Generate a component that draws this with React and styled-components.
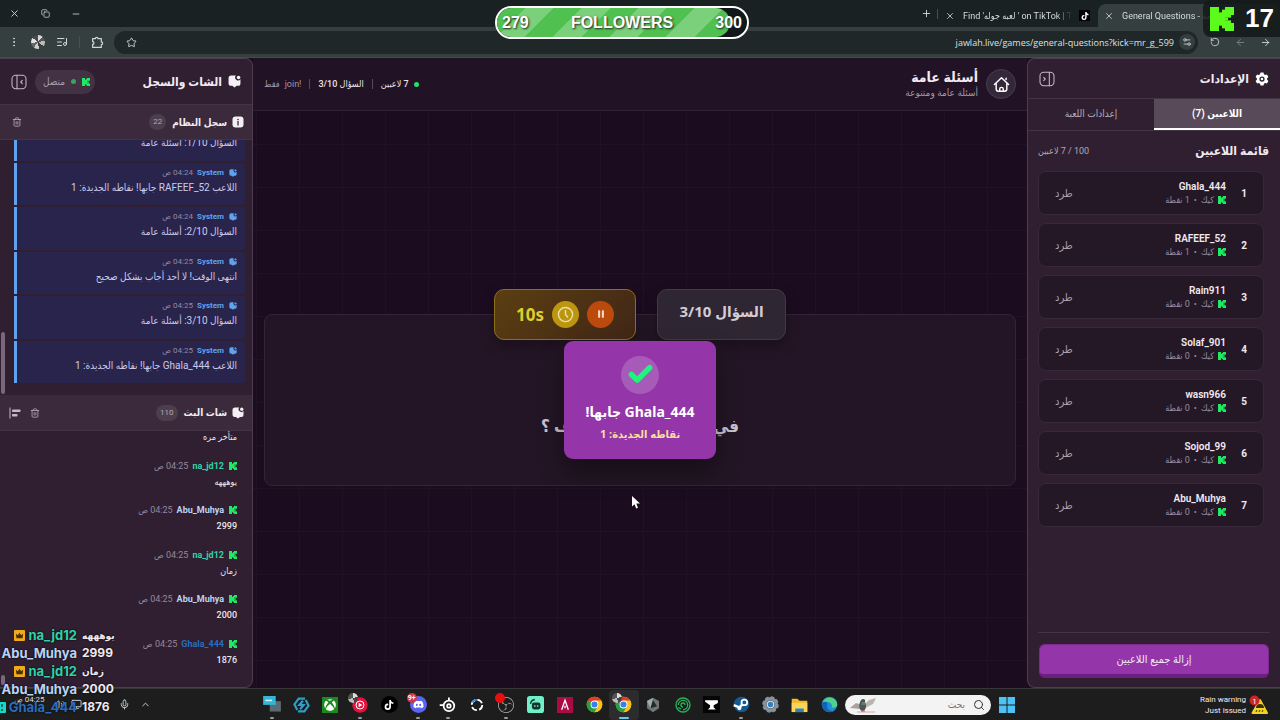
import styled, { createGlobalStyle, css } from 'styled-components';
import {
  X, Copy, Minus, Plus, Star, ListMusic, EllipsisVertical, RotateCw, ArrowLeft, ArrowRight,
  Trash2, Pause, Check, Search, Mic, ChevronUp, Volume2, Monitor, Settings2,
} from 'lucide-react';
import { FaTiktok, FaDiscord, FaXbox } from 'react-icons/fa';
import { SiObsstudio } from 'react-icons/si';


const GlobalStyle = createGlobalStyle`
  * { box-sizing: border-box; }
  body {
    margin: 0;
    background: #1b0c1f;
    font-family: Roboto, "Noto Sans", "DejaVu Sans Condensed", "DejaVu Sans", sans-serif;
    color: #f1eaf2;
    overflow: hidden;
  }
  button, input { font: inherit; color: inherit; border: 0; background: none; padding: 0; margin: 0; }
  h1, h2, h3, p, ul, ol { margin: 0; padding: 0; list-style: none; }
  svg { display: block; flex: none; }
`;

const Page = styled.div`
  position: relative;
  display: flex;
  flex-direction: column;
  height: 100vh;
  direction: rtl;
  overflow: hidden;
`;

/* ---------- browser ---------- */

const TabStrip = styled.div`
  display: flex;
  align-items: center;
  height: 27px;
  background: #1a2122;
  font-size: 9px;
  color: #d6dcdc;
`;

const BrowserTab = styled.div`
  display: flex;
  align-items: center;
  gap: 7px;
  height: 23px;
  margin-top: 4px;
  border-radius: 8px 8px 0 0;
  background: ${(props) => (props.$active ? '#353f3f' : 'transparent')};
  width: ${(props) => (props.$active ? '182px' : '160px')};
  padding: ${(props) => (props.$active ? '0 52px 0 5px' : '0 8px 0 6px')};
`;

const TabTitle = styled.span`
  flex: 1;
  min-width: 0;
  overflow: hidden;
  white-space: nowrap;
  direction: ltr;
  mask-image: linear-gradient(to left, transparent, #000 16px);
`;

const IconButton = styled.button`
  display: flex;
  align-items: center;
  justify-content: center;
  width: ${(props) => props.$size || 16}px;
  height: ${(props) => props.$size || 16}px;
  flex: none;
  color: ${(props) => props.$color || '#cfd6d6'};
`;

const TikTokFavicon = styled.span`
  display: flex;
  align-items: center;
  justify-content: center;
  width: 11px;
  height: 11px;
  background: #000;
  color: #fff;
`;

const Divider = styled.span`
  width: 1px;
  height: ${(props) => props.$height || 10}px;
  background: ${(props) => props.$color || '#465051'};
`;

const WindowControls = styled.div`
  display: flex;
  gap: 15px;
  margin-right: auto;
  padding-left: 6px;
`;

const Toolbar = styled.div`
  display: flex;
  align-items: center;
  gap: 9px;
  height: 31px;
  padding: 0 7px 0 6px;
  background: #353f3f;
  border-bottom: 1px solid #484b4e;
`;

const AddressBar = styled.div`
  display: flex;
  align-items: center;
  flex: 1;
  height: 23px;
  padding: 0 3px 0 9px;
  gap: 5px;
  border-radius: 12px;
  background: #1f2728;
`;

const AddressInput = styled.input`
  flex: 1;
  min-width: 0;
  direction: ltr;
  text-align: right;
  font-family: "Open Sans", sans-serif;
  font-size: 9px;
  color: #dde2e2;
`;

const TuneBadge = styled.span`
  display: flex;
  align-items: center;
  justify-content: center;
  width: 16px;
  height: 16px;
  border-radius: 50%;
  background: #353f3f;
`;

const Avatar = styled.span`
  width: 14px;
  height: 14px;
  border-radius: 50%;
  background: conic-gradient(#d8d8d8 0 12%, #555 0 22%, #bbb 0 35%, #3c3c3c 0 48%, #cfcfcf 0 60%, #666 0 72%, #e2e2e2 0 85%, #4a4a4a 0);
`;

/* ---------- shared panel parts ---------- */

const Main = styled.main`
  flex: 1;
  min-height: 0;
  display: grid;
  grid-template-columns: 253px 1fr 253px;
`;

const Panel = styled.aside`
  display: flex;
  flex-direction: column;
  min-height: 0;
  min-width: 0;
  background: #2f1f30;
  border: 1px solid #4d3d4e;
  ${(props) =>
    props.$side === 'right'
      ? css`border-radius: 8px 0 0 8px; border-right: 0;`
      : css`border-radius: 0 8px 8px 0; border-left: 0;`}
  overflow: hidden;
`;

const PanelHeader = styled.header`
  display: flex;
  align-items: center;
  gap: 8px;
  flex: none;
  height: ${(props) => props.$height}px;
  padding: 0 11px;
  border-bottom: 1px solid #443345;
`;

const PanelTitle = styled.h2`
  display: flex;
  align-items: center;
  gap: 6px;
  font-size: 12px;
  line-height: 16px;
  margin-left: auto;
  white-space: nowrap;
`;

const SubHeader = styled(PanelHeader)`
  background: #3a2a3b;
  gap: 6px;
  padding: 0 8px 0 9px;
`;

const SubTitle = styled.h3`
  display: flex;
  align-items: center;
  gap: 5px;
  font-size: 10px;
  white-space: nowrap;
`;

const CountBadge = styled.span`
  padding: 0 4px;
  border-radius: 8px;
  background: #4d3e4e;
  color: #b3a8b4;
  font-size: 8px;
  line-height: 16px;
  margin-left: auto;
`;

/* ---------- settings panel ---------- */

const Tabs = styled.div`
  display: grid;
  grid-template-columns: 1fr 1fr;
  flex: none;
  height: 32px;
  border-bottom: 1px solid #443345;
`;

const TabButton = styled.button`
  font-size: 10px;
  font-weight: ${(props) => (props.$active ? 600 : 500)};
  color: ${(props) => (props.$active ? '#fff' : '#b9adba')};
  background: ${(props) => (props.$active ? '#594a5a' : 'transparent')};
  border-bottom: 2px solid ${(props) => (props.$active ? '#fff' : 'transparent')};
`;

const ListHeading = styled.div`
  display: flex;
  align-items: center;
  justify-content: space-between;
  height: 40px;
  padding: 0 11px 0 10px;
  flex: none;
`;

const ListCount = styled.span`
  font-size: 9px;
  color: #b3a8b4;
`;

const PlayerList = styled.ol`
  display: flex;
  flex-direction: column;
  gap: 8px;
  flex: 1;
  margin: 0 10px;
  padding: 0 6px 0 0;
  border-bottom: 1px solid #443345;
`;

const PlayerCard = styled.li`
  display: flex;
  align-items: center;
  height: 44px;
  padding: 0 16px;
  border: 1px solid #37293a;
  border-radius: 8px;
  background: #251826;
`;

const Rank = styled.span`
  width: 21px;
  font-size: 10px;
  font-weight: 700;
`;

const PlayerInfo = styled.div`
  flex: 1;
`;

const PlayerName = styled.p`
  font-size: 10px;
  line-height: 14px;
  font-weight: 600;
`;

const PlayerMeta = styled.p`
  display: flex;
  align-items: center;
  gap: 4px;
  font-size: 9px;
  line-height: 12px;
  font-weight: 400;
  color: #988a9a;
`;

const KickButton = styled.button`
  font-size: 11px;
  color: #a99dab;
`;

const PanelFooter = styled.footer`
  padding: 11px 11px 9px;
`;

const RemoveAll = styled.button`
  display: block;
  width: 100%;
  height: 34px;
  border-radius: 6px;
  border: 1px solid #7b2890;
  border-bottom: 4px solid #6d1f82;
  background: #9535aa;
  font-size: 11px;
`;

/* ---------- game area ---------- */

const Game = styled.section`
  display: flex;
  flex-direction: column;
  min-width: 0;
  background: #1b0c1f;
`;

const GameHeader = styled.header`
  display: flex;
  align-items: center;
  gap: 8px;
  height: 53px;
  padding: 0 11px;
  background: #211225;
  border-bottom: 1px solid #302133;
`;

const HomeButton = styled.button`
  display: flex;
  align-items: center;
  justify-content: center;
  width: 30px;
  height: 30px;
  border-radius: 50%;
  border: 1px solid #4a3d4d;
  background: #35273a;
`;

const GameTitle = styled.h1`
  font-size: 14px;
  line-height: 17px;
`;

const GameSubtitle = styled.p`
  font-size: 10px;
  line-height: 14px;
  font-weight: 400;
  color: #a396a6;
`;

const Status = styled.div`
  display: flex;
  align-items: center;
  gap: 8px;
  margin-right: auto;
  font-size: 9px;
`;

const StatusItem = styled.span`
  display: flex;
  align-items: center;
  gap: 5px;
  font-weight: ${(props) => (props.$muted ? 400 : 500)};
  color: ${(props) => (props.$muted ? '#a396a6' : '#e9e2ea')};
`;

const Dot = styled.span`
  width: 5px;
  height: 5px;
  border-radius: 50%;
  background: ${(props) => props.$color};
`;

const Board = styled.div`
  flex: 1;
  display: flex;
  align-items: center;
  padding: 0 11px;
  background-image: linear-gradient(#1f1223 1px, transparent 1px), linear-gradient(90deg, #1f1223 1px, transparent 1px);
  background-size: 43px 43px;
  background-position: 3px 33px;
`;

const QuestionCard = styled.div`
  position: relative;
  display: flex;
  justify-content: center;
  align-items: center;
  flex: 1;
  height: 172px;
  padding-top: 53px;
  border: 1px solid #322436;
  border-radius: 8px;
  background: #231525;
`;

const Question = styled.p`
  display: flex;
  justify-content: space-between;
  width: 198px;
  font-size: 17px;
  font-weight: 700;
  color: #cbc3cd;
`;

const BadgeRow = styled.div`
  position: absolute;
  top: -26px;
  left: 0;
  right: 0;
  display: flex;
  justify-content: center;
  gap: 21px;
`;

const Badge = styled.div`
  display: flex;
  align-items: center;
  justify-content: center;
  gap: 8px;
  height: 51px;
  width: ${(props) => (props.$timer ? '142px' : '129px')};
  border: 1px solid ${(props) => (props.$timer ? '#8c7019' : '#443947')};
  border-radius: 10px;
  background: ${(props) => (props.$timer ? 'linear-gradient(135deg, #5b3f11, #412617)' : '#2f2634')};
  color: ${(props) => (props.$timer ? '#dfce2f' : '#d3ccd5')};
  font-family: "Noto Sans", "DejaVu Sans Condensed", sans-serif;
  font-size: ${(props) => (props.$timer ? '17px' : '15px')};
  font-weight: 700;
  padding-bottom: ${(props) => (props.$timer ? '0' : '6px')};
  box-shadow: 0 6px 14px rgba(0, 0, 0, 0.25);
`;

const Round = styled.span`
  display: flex;
  align-items: center;
  justify-content: center;
  width: ${(props) => props.$size || 27}px;
  height: ${(props) => props.$size || 27}px;
  border-radius: 50%;
  background: ${(props) => props.$color};
`;

const PauseButton = styled.button`
  display: flex;
  align-items: center;
  justify-content: center;
  width: 27px;
  height: 27px;
  border-radius: 50%;
  background: #bb4a0c;
  color: #f4d9c8;
`;

const WinnerModal = styled.div`
  position: absolute;
  top: 26px;
  left: 50%;
  transform: translateX(-50%);
  display: flex;
  flex-direction: column;
  align-items: center;
  width: 152px;
  height: 118px;
  padding-top: 15px;
  border-radius: 9px;
  background: #9435a9;
  box-shadow: 0 14px 26px rgba(0, 0, 0, 0.35);
  font-family: "Noto Sans", "DejaVu Sans Condensed", sans-serif;
  font-weight: 700;
  white-space: nowrap;
`;

const CheckCircle = styled.span`
  display: flex;
  align-items: center;
  justify-content: center;
  width: 38px;
  height: 38px;
  border-radius: 50%;
  background: #a75bb8;
  color: #1ef57d;
  margin-bottom: 7px;
`;

const WinnerName = styled.p`
  font-size: 14px;
  line-height: 22px;
  color: #fff;
`;

const WinnerPoints = styled.p`
  font-size: 11px;
  line-height: 22px;
  color: #f8df9a;
`;

const Cursor = styled.svg`
  position: absolute;
  left: 50%;
  top: 181px;
  margin-left: -8px;
`;

/* ---------- chat panel ---------- */

const ConnectPill = styled.span`
  display: flex;
  align-items: center;
  gap: 6px;
  height: 24px;
  padding: 0 5px 0 8px;
  border-radius: 12px;
  background: #433244;
  color: #a99dab;
  font-size: 10px;
`;

const Feed = styled.div`
  position: relative;
  display: flex;
  flex-direction: column;
  justify-content: flex-end;
  flex: ${(props) => (props.$height ? `none` : 1)};
  height: ${(props) => (props.$height ? `${props.$height}px` : 'auto')};
  min-height: 0;
  padding: 0 7px 12px 14px;
  overflow: hidden;
`;

const FeedList = styled.ul`
  display: flex;
  flex-direction: column;
  flex: none;
  gap: 2px;
  height: 265px;
`;

const FeedRow = styled.li`
  flex: 1;
  min-height: 0;
  padding: 4px 8px;
  ${(props) =>
    props.$system &&
    css`
      padding: 3px 8px;
      background: #29244c;
      border-left: 3px solid #5fa3ee;
      border-radius: 0 3px 3px 0;
    `}
`;

const RowMeta = styled.div`
  display: flex;
  align-items: center;
  gap: 4px;
  font-size: ${(props) => (props.$system ? '8px' : '9px')};
  line-height: 14px;
  color: #9488a0;
`;

const Author = styled.span`
  font-weight: 700;
  margin-right: 1px;
  color: ${(props) => props.$color};
`;

const RowText = styled.p`
  font-size: ${(props) => (props.$system ? '10px' : '9px')};
  line-height: ${(props) => (props.$system ? '16px' : '19px')};
  font-weight: ${(props) => (props.$system ? 400 : 500)};
  color: ${(props) => (props.$system ? '#c9cbec' : '#ece6ed')};
  white-space: nowrap;
`;

const ScrollThumb = styled.span`
  position: absolute;
  left: 1px;
  bottom: ${(props) => props.$bottom}px;
  width: 4px;
  height: ${(props) => props.$height}px;
  border-radius: 2px;
  background: #79687b;
`;

/* ---------- taskbar ---------- */

const Taskbar = styled.footer`
  display: grid;
  grid-template-columns: 1fr auto 1fr;
  align-items: center;
  height: 32px;
  padding-right: 8px;
  background: #1d1d1e;
  border-top: 1px solid #39363a;
`;

const Weather = styled.div`
  display: flex;
  align-items: center;
  gap: 3px;
  padding-right: 3px;
  font-size: 8px;
  line-height: 11px;
  white-space: nowrap;
`;

const Dock = styled.div`
  display: flex;
  align-items: center;
  gap: 8px;
`;

const SearchBox = styled.label`
  display: flex;
  align-items: center;
  gap: 8px;
  width: 146px;
  height: 20px;
  padding: 0 6px 0 4px;
  border-radius: 10px;
  background: #f3f3f3;
  color: #333;
`;

const SearchInput = styled.input`
  flex: 1;
  min-width: 0;
  font-size: 10px;
  &::placeholder { color: #777; opacity: 1; }
`;

const Apps = styled.div`
  display: grid;
  grid-template-columns: repeat(20, 1fr);
  width: 587px;
  margin-right: -7px;
`;

const AppButton = styled.button`
  position: relative;
  display: flex;
  align-items: center;
  justify-content: center;
  height: 30px;
  border-radius: 4px;
  background: ${(props) => (props.$current ? '#2c2c2e' : 'transparent')};
  &::after {
    content: '';
    position: absolute;
    bottom: 1px;
    width: ${(props) => (props.$current ? '10px' : '4px')};
    height: 2px;
    border-radius: 1px;
    background: ${(props) => (props.$current ? '#6cc9e8' : '#9a9a9a')};
    display: ${(props) => (props.$current || props.$running ? 'block' : 'none')};
  }
`;

const AppBadge = styled.span`
  position: absolute;
  top: 3px;
  left: 3px;
  min-width: 10px;
  height: 10px;
  border-radius: 5px;
  direction: ltr;
  font-size: 7px;
  line-height: 10px;
  font-weight: 700;
  color: #fff;
  background: ${(props) => props.$color};
`;

const Tray = styled.div`
  display: flex;
  align-items: center;
  justify-content: flex-end;
  gap: 9px;
  padding-left: 14px;
  color: #dcdcdc;
`;

const TrayGroup = styled.div`
  display: flex;
  gap: 6px;
  margin-right: 28px;
`;

const Clock = styled.time`
  font-size: 8px;
  line-height: 10px;
  height: 20px;
  white-space: nowrap;
`;

/* ---------- stream overlays ---------- */

const FollowerGoal = styled.div`
  position: absolute;
  top: 6px;
  left: 495px;
  display: grid;
  grid-template-columns: 1fr auto 1fr;
  align-items: center;
  width: 254px;
  height: 33px;
  padding: 0 5px;
  border: 2px solid #fff;
  border-radius: 17px;
  direction: ltr;
  font: 700 16px "Liberation Sans", sans-serif;
  color: #fff;
  text-shadow: 1px 1px 2px #222;
  background: #11181a;
  overflow: hidden;
`;

const GoalFill = styled.span`
  position: absolute;
  inset: 0 auto 0 0;
  border-radius: 0 15px 15px 0;
  background: repeating-linear-gradient(135deg, #50c150 0 20px, #7bd07b 20px 40px);
`;

const GoalText = styled.span`
  position: relative;
  text-align: ${(props) => props.$align || 'left'};
`;

const KickCounter = styled.div`
  position: absolute;
  top: 0;
  right: 0;
  display: flex;
  align-items: center;
  gap: 11px;
  height: 37px;
  padding: 0 6px 0 7px;
  border-radius: 8px 0 0 8px;
  direction: ltr;
  background: rgba(20, 26, 26, 0.88);
  font: 700 26px "Liberation Sans", sans-serif;
  color: #fff;
`;

const StreamChat = styled.ul`
  position: absolute;
  left: 0;
  bottom: 4px;
  direction: ltr;
  font: 700 13px/18px Inter, "DejaVu Sans Condensed", sans-serif;
  text-shadow: 0 0 2px #000;
`;

const StreamLine = styled.li`
  display: grid;
  grid-template-columns: 77px auto;
  gap: 5px;
  height: 18px;
  white-space: nowrap;
`;

const StreamAuthor = styled.span`
  display: flex;
  align-items: center;
  justify-content: flex-end;
  gap: 3px;
  color: ${(props) => props.$color};
`;

const StreamText = styled.span`
  font-size: ${(props) => (props.$arabic ? '10px' : '12px')};
`;

/* ---------- icons ---------- */

const KickLogo = ({ size = 9, color = '#1dea62' }) => (
  <svg width={size} height={size} viewBox="0 0 8 9" preserveAspectRatio="none" fill={color}>
    <rect width="3" height="9" />
    <rect x="3" y="2" width="1" height="5" />
    <rect x="4" y="1" width="1" height="7" />
    <rect x="5" width="3" height="3" />
    <rect x="5" y="3" width="2" height="1" />
    <rect x="5" y="4" width="1" height="1" />
    <rect x="5" y="5" width="2" height="1" />
    <rect x="5" y="6" width="3" height="3" />
  </svg>
);

const ChatIcon = ({ size = 12, color = '#f4eff5' }) => (
  <svg width={size} height={size} viewBox="0 0 24 24" fill={color}>
    <path d="M6 1h8.500a5 5 0 0 0 8.500 7v8a4 4 0 0 1-4 4h-3l-4 3-4-3H6a5 5 0 0 1-5-5V6a5 5 0 0 1 5-5z" />
    <circle cx="19.5" cy="4.5" r="3.3" />
  </svg>
);

const InfoIcon = () => (
  <svg width="12" height="12" viewBox="0 0 24 24">
    <rect x="1" y="1" width="22" height="22" rx="6" fill="#f4eff5" />
    <path d="M12 11v7" stroke="#3a2a3b" strokeWidth="2.6" strokeLinecap="round" />
    <circle cx="12" cy="7" r="1.6" fill="#3a2a3b" />
  </svg>
);

const GearIcon = () => (
  <svg width="14" height="14" viewBox="0 0 24 24" fill="none">
    <path
      fill="#fff"
      fillRule="evenodd"
      d="M9.5 1h5l.9 3 2 1.2 3.1-.8 2.5 4.3-2.2 2.200v2.200l2.200 2.200-2.500 4.300-3.100-.8-2 1.200-.9 3h-5l-.9-3-2-1.200-3.100.8L1 15.300l2.200-2.200v-2.200L1 8.700l2.500-4.300 3.100.8 2-1.200zM12 7.500a4.500 4.500 0 1 0 0 9 4.500 4.500 0 0 0 0-9z"
    />
    <circle cx="12" cy="12" r="2.2" fill="#fff" />
  </svg>
);

const SidebarIcon = ({ flip }) => (
  <svg width="16" height="16" viewBox="0 0 24 24" fill="none" stroke="#c3b8c5" strokeWidth="1.6" strokeLinecap="round">
    <rect x="1.5" y="2" width="21" height="20" rx="5.5" />
    {flip ? <path d="M15.5 2v20M7 9.5l2.500 2.500L7 14.500" /> : <path d="M9 2v20M17 9.500L14.500 12l2.500 2.500" />}
  </svg>
);

const HomeIcon = () => (
  <svg width="17" height="17" viewBox="0 0 24 24" fill="none" stroke="#fff" strokeWidth="2" strokeLinecap="round" strokeLinejoin="round">
    <path d="M2 12l10-9.500L22 12M18.500 5V3M4.500 10v8.500a3 3 0 0 0 3 3h9a3 3 0 0 0 3-3V10" />
    <path d="M9.500 21v-2.500a2.500 2.500 0 0 1 5 0V21" />
  </svg>
);

const PuzzleIcon = () => (
  <svg width="13" height="13" viewBox="0 0 24 24" fill="none" stroke="currentColor" strokeWidth="2.2" strokeLinejoin="round">
    <path d="M3 5h5a2.500 2.500 0 0 1 5 0h6v6a2.500 2.500 0 0 1 0 5v5H3v-5.500a2.500 2.500 0 0 0 0-5z" />
  </svg>
);

const AlignIcon = () => (
  <svg width="12" height="12" viewBox="0 0 24 24" fill="#c3b8c5">
    <rect x="1" y="1" width="2" height="22" />
    <rect x="6" y="5" width="17" height="5" rx="1.5" />
    <rect x="6" y="14" width="11" height="5" rx="1.5" />
  </svg>
);

const ClockIcon = () => (
  <svg width="17" height="17" viewBox="0 0 24 24" fill="none" stroke="#eadfa8" strokeWidth="2" strokeLinecap="round">
    <circle cx="12" cy="12" r="10" />
    <path d="M12 6.500V12l3 3.500" />
  </svg>
);

const CrownBadge = () => (
  <svg width="11" height="11" viewBox="0 0 12 12">
    <rect width="12" height="12" rx="1" fill="#efab1b" />
    <path d="M2 4l2.200 1.800L6 3l1.800 2.800L10 4l-.7 5H2.700z" fill="#4a2f00" />
  </svg>
);

const BotBadge = () => (
  <svg width="10" height="11" viewBox="0 0 10 11">
    <rect width="10" height="11" rx="1" fill="#17d9c5" />
    <path d="M3 2v7M6 2v3M6 7v2" stroke="#0b4b52" strokeWidth="1.5" />
  </svg>
);

const WarningIcon = () => (
  <svg width="20" height="20" viewBox="0 0 20 20">
    <path d="M11 5l7 13H3.500z" fill="#f4d321" stroke="#f4d321" strokeWidth="2" strokeLinejoin="round" />
    <path d="M7 13a4 4 0 0 1 8 0z" fill="#3a3206" />
    <path d="M8 15l-1 2M11 15l-1 2M14 15l-1 2" stroke="#3a3206" />
    <circle cx="5.5" cy="5.5" r="5" fill="#c62828" />
    <text x="5.5" y="8.5" fontSize="8" textAnchor="middle" fill="#fff">1</text>
  </svg>
);

const StartIcon = () => (
  <svg width="16" height="16" viewBox="0 0 16 16" fill="#4cc2f5">
    <rect width="7.5" height="7.5" />
    <rect x="8.5" width="7.5" height="7.5" />
    <rect y="8.5" width="7.5" height="7.5" />
    <rect x="8.5" y="8.5" width="7.5" height="7.5" />
  </svg>
);

const Pigeon = () => (
  <svg width="28" height="16" viewBox="0 0 28 16">
    <path d="M15 8l5-5 7-2-3 6-8 4z" fill="#b9b5ac" />
    <path d="M1 11l6-5 6 2-2 4z" fill="#a7a49d" />
    <path d="M12 3c2-2 5-1 4 2 2 4 1 8-2 9-4 0-5-6-2-11z" fill="#4d555c" />
    <path d="M13 5h3v3h-4z" fill="#5d7f6c" />
    <path d="M8 15h18" stroke="#d1aaa6" />
    <path d="M13 13v2M15 13v2" stroke="#c7504a" />
  </svg>
);

const ChromeIcon = () => (
  <svg width="17" height="17" viewBox="0 0 24 24">
    <circle cx="12" cy="12" r="11" fill="#fbc116" />
    <path d="M12 12L2.500 6.500A11 11 0 0 1 21.500 6.500z" fill="#e33b2e" />
    <path d="M12 12L2.500 6.500A11 11 0 0 0 12 23l5-8z" fill="#269f42" />
    <path d="M12 6.500h9.500A11 11 0 0 1 12 23l5-8z" fill="#fbc116" />
    <circle cx="12" cy="12" r="5.5" fill="#fff" />
    <circle cx="12" cy="12" r="4.3" fill="#3b7ded" />
  </svg>
);

const EdgeIcon = () => (
  <svg width="17" height="17" viewBox="0 0 24 24">
    <circle cx="12" cy="12" r="11" fill="#1f8fd8" />
    <path d="M2 9a11 11 0 0 1 21 3c0 4-4 5-8 4 3-5-5-10-13-7z" fill="#4fd08b" />
    <path d="M9 12c-2 6 3 10 9 9A11 11 0 0 1 1.500 10c3-3 8-2 7.500 2z" fill="#1462b5" />
  </svg>
);

const FolderIcon = () => (
  <svg width="17" height="16" viewBox="0 0 24 22">
    <path d="M1 2h8l3 3h11v16H1z" fill="#f2b92e" />
    <path d="M1 8h22v13H1z" fill="#fbd45c" />
    <path d="M6 21v-5h12v5z" fill="#2d83bf" />
  </svg>
);

const SettingsApp = () => (
  <svg width="17" height="17" viewBox="0 0 24 24">
    <circle cx="12" cy="12" r="8" fill="none" stroke="#87929d" strokeWidth="5" />
    <circle cx="12" cy="12" r="10.2" fill="none" stroke="#87929d" strokeWidth="3" strokeDasharray="5 3" />
    <circle cx="12" cy="12" r="4.5" fill="#2f7fc4" stroke="#dce6ee" strokeWidth="1.5" />
  </svg>
);

const SteamIcon = () => (
  <svg width="17" height="17" viewBox="0 0 24 24">
    <circle cx="12" cy="12" r="11" fill="#145a91" />
    <path d="M1 13l8 3 5-5" stroke="#fff" strokeWidth="3.5" fill="none" />
    <circle cx="9" cy="17" r="3" fill="#fff" />
    <circle cx="16" cy="9" r="4" fill="#145a91" stroke="#fff" strokeWidth="2.5" />
  </svg>
);

const AnvilIcon = () => (
  <svg width="17" height="17" viewBox="0 0 24 24">
    <rect width="24" height="24" fill="#050505" />
    <path d="M3 6h18v4l-6 3v3l3 3H7l3-3v-3L3 8z" fill="#fff" />
  </svg>
);

const SpiralIcon = () => (
  <svg width="16" height="16" viewBox="0 0 24 24" fill="none" stroke="#27b35a" strokeWidth="2">
    <circle cx="12" cy="12" r="10.5" />
    <path d="M5 12a7 7 0 1 1 7 7M12 15a3 3 0 1 1 3-3M9 18l-4-2" />
  </svg>
);

const CubeIcon = () => (
  <svg width="16" height="16" viewBox="0 0 24 24">
    <path d="M12 1l9 5v11l-9 6-9-6V6z" fill="#6f7678" />
    <path d="M12 5l6 9-10 3z" fill="#23282a" />
    <path d="M3 6l9-5-4 16z" fill="#a4abad" />
  </svg>
);

const RedAIcon = () => (
  <svg width="16" height="16" viewBox="0 0 24 24">
    <rect width="24" height="24" fill="#a90b45" />
    <path d="M7 19l5-14 5 14M12 13v4" stroke="#fff" strokeWidth="2" fill="none" />
  </svg>
);

const MintIcon = () => (
  <svg width="17" height="17" viewBox="0 0 24 24">
    <rect width="24" height="24" rx="4" fill="#70f0c8" />
    <rect x="7" y="9" width="12" height="10" rx="3" fill="#16332c" />
    <path d="M5 11a7 7 0 0 1 6-6" stroke="#16332c" strokeWidth="2" fill="none" />
    <path d="M11 13v2M15 13v2" stroke="#70f0c8" strokeWidth="2" />
  </svg>
);

const RingIcon = () => (
  <svg width="14" height="14" viewBox="0 0 24 24" fill="none" strokeWidth="3">
    <circle cx="12" cy="12" r="9" stroke="#fff" strokeDasharray="10 4" />
    <path d="M12 3a9 9 0 0 0-8 5" stroke="#2f8fe0" />
  </svg>
);

const SteelIcon = () => (
  <svg width="17" height="17" viewBox="0 0 24 24" fill="none" stroke="#fff" strokeWidth="2.5">
    <circle cx="14" cy="14" r="7.5" />
    <circle cx="14" cy="14" r="2.5" />
    <path d="M1 13h6M14 2v4" />
  </svg>
);

const MusicIcon = () => (
  <svg width="16" height="16" viewBox="0 0 24 24">
    <circle cx="12" cy="12" r="11.5" fill="#e8113c" />
    <circle cx="12" cy="12" r="6" fill="none" stroke="#fff" strokeWidth="1.5" />
    <path d="M10 8.500l5.500 3.500-5.500 3.500z" fill="#fff" />
  </svg>
);

const XboxIcon = () => (
  <svg width="16" height="16" viewBox="0 0 24 24">
    <rect width="24" height="24" fill="#198a20" />
    <g transform="translate(3 3)"><FaXbox size={18} color="#fff" /></g>
  </svg>
);

const BoltIcon = () => (
  <svg width="17" height="16" viewBox="0 0 24 22" fill="none" stroke="#2f9fc8" strokeWidth="3">
    <path d="M17 2H8L2 10l4 8M7 20h9l6-8-4-8M14 5l-5 6h6l-5 6" />
  </svg>
);

const DesktopIcon = () => (
  <svg width="18" height="17" viewBox="0 0 24 23">
    <rect x="9" y="7" width="15" height="14" fill="#5b6b74" />
    <rect width="17" height="12" fill="#35b6d6" />
    <path d="M3 6h9" stroke="#d7f4fb" strokeWidth="2" />
  </svg>
);

/* ---------- data ---------- */

const players = [
  { name: 'Ghala_444', points: 1 },
  { name: 'RAFEEF_52', points: 1 },
  { name: 'Rain911', points: 0 },
  { name: 'Solaf_901', points: 0 },
  { name: 'wasn966', points: 0 },
  { name: 'Sojod_99', points: 0 },
  { name: 'Abu_Muhya', points: 0 },
];

const systemLog = [
  { time: '04:24', text: 'السؤال 1/10: أسئلة عامة' },
  { time: '04:24', text: 'اللاعب RAFEEF_52 جابها! نقاطه الجديدة: 1' },
  { time: '04:24', text: 'السؤال 2/10: أسئلة عامة' },
  { time: '04:25', text: 'انتهى الوقت! لا أحد أجاب بشكل صحيح' },
  { time: '04:25', text: 'السؤال 3/10: أسئلة عامة' },
  { time: '04:25', text: 'اللاعب Ghala_444 جابها! نقاطه الجديدة: 1' },
];

const TEAL = '#2fd3a8';
const PALE = '#bcd3f5';
const BLUE = '#2b6cbf';

const chat = [
  { name: 'na_jd12', color: TEAL, text: 'متأخر مره', arabic: true },
  { name: 'na_jd12', color: TEAL, text: 'يوهههه', arabic: true },
  { name: 'Abu_Muhya', color: PALE, text: '2999' },
  { name: 'na_jd12', color: TEAL, text: 'زمان', arabic: true },
  { name: 'Abu_Muhya', color: PALE, text: '2000' },
  { name: 'Ghala_444', color: BLUE, text: '1876' },
];

const apps = [
  { name: 'Edge', icon: <EdgeIcon /> },
  { name: 'Explorer', icon: <FolderIcon /> },
  { name: 'Settings', icon: <SettingsApp /> },
  { name: 'Steam', icon: <SteamIcon />, running: true },
  { name: 'Anvil', icon: <AnvilIcon /> },
  { name: 'Spiral', icon: <SpiralIcon /> },
  { name: 'Cube', icon: <CubeIcon /> },
  { name: 'Chrome', icon: <ChromeIcon />, current: true, avatar: true },
  { name: 'Chrome work', icon: <ChromeIcon /> },
  { name: 'Armoury', icon: <RedAIcon /> },
  { name: 'Streamlabs', icon: <MintIcon /> },
  { name: 'OBS', icon: <SiObsstudio size={16} color="#b5b5b5" />, running: true, badge: '\u00a0', badgeColor: '#e60e0e' },
  { name: 'Ring', icon: <RingIcon /> },
  { name: 'SteelSeries', icon: <SteelIcon />, running: true },
  { name: 'Discord', icon: <Round $size={17} $color="#5865f2"><FaDiscord size={11} color="#fff" /></Round>, running: true, badge: '9+', badgeColor: '#c8394b' },
  { name: 'TikTok', icon: <Round $size={17} $color="#000"><FaTiktok size={10} color="#fff" /></Round> },
  { name: 'Music', icon: <MusicIcon />, running: true, avatar: true },
  { name: 'Xbox', icon: <XboxIcon /> },
  { name: 'Bolt', icon: <BoltIcon /> },
  { name: 'Desktop', icon: <DesktopIcon />, running: true },
];

function Browser() {
  return (
    <>
      <TabStrip>
        <BrowserTab $active>
          <TabTitle>General Questions - أسئلة عامة</TabTitle>
          <IconButton $size={12} aria-label="Close tab"><X size={10} /></IconButton>
        </BrowserTab>
        <BrowserTab>
          <TikTokFavicon><FaTiktok size={8} /></TikTokFavicon>
          <TabTitle>Find 'لعبه جوله ' on TikTok | TikTok</TabTitle>
          <IconButton $size={12} aria-label="Close tab"><X size={10} /></IconButton>
        </BrowserTab>
        <Divider />
        <IconButton $size={22} aria-label="New tab"><Plus size={11} /></IconButton>
        <WindowControls>
          <IconButton aria-label="Minimize"><Minus size={10} /></IconButton>
          <IconButton aria-label="Restore"><Copy size={9} /></IconButton>
          <IconButton aria-label="Close"><X size={11} /></IconButton>
        </WindowControls>
      </TabStrip>
      <Toolbar>
        <IconButton aria-label="Back"><ArrowRight size={11} /></IconButton>
        <IconButton aria-label="Forward" $color="#788384"><ArrowLeft size={11} /></IconButton>
        <IconButton aria-label="Reload"><RotateCw size={10} transform="scale(-1 1)" /></IconButton>
        <AddressBar>
          <TuneBadge><Settings2 size={10} color="#cfd6d6" /></TuneBadge>
          <AddressInput aria-label="Address" readOnly value="jawlah.live/games/general-questions?kick=mr_g_599" />
          <IconButton aria-label="Bookmark"><Star size={11} /></IconButton>
        </AddressBar>
        <IconButton aria-label="Extensions"><PuzzleIcon /></IconButton>
        <Divider $height={12} />
        <IconButton aria-label="Media"><ListMusic size={12} /></IconButton>
        <Avatar />
        <IconButton aria-label="Menu"><EllipsisVertical size={12} /></IconButton>
      </Toolbar>
    </>
  );
}

function SettingsPanel() {
  return (
    <Panel $side="right">
      <PanelHeader $height={40}>
        <PanelTitle><GearIcon />الإعدادات</PanelTitle>
        <IconButton aria-label="إخفاء"><SidebarIcon flip /></IconButton>
      </PanelHeader>
      <Tabs>
        <TabButton $active>اللاعبين (7)</TabButton>
        <TabButton>إعدادات اللعبة</TabButton>
      </Tabs>
      <ListHeading>
        <PanelTitle>قائمة اللاعبين</PanelTitle>
        <ListCount>100 / 7 لاعبين</ListCount>
      </ListHeading>
      <PlayerList>
        {players.map((p, i) => (
          <PlayerCard key={p.name}>
            <Rank>{i + 1}</Rank>
            <PlayerInfo>
              <PlayerName>{p.name}</PlayerName>
              <PlayerMeta>
                <KickLogo size={8} />
                <span>كيك</span>
                <span>•</span>
                <span>{p.points} نقطة</span>
              </PlayerMeta>
            </PlayerInfo>
            <KickButton>طرد</KickButton>
          </PlayerCard>
        ))}
      </PlayerList>
      <PanelFooter>
        <RemoveAll>إزالة جميع اللاعبين</RemoveAll>
      </PanelFooter>
    </Panel>
  );
}

function GameArea() {
  return (
    <Game>
      <GameHeader>
        <HomeButton aria-label="الرئيسية"><HomeIcon /></HomeButton>
        <div>
          <GameTitle>أسئلة عامة</GameTitle>
          <GameSubtitle>أسئلة عامة ومتنوعة</GameSubtitle>
        </div>
        <Status>
          <StatusItem><Dot $color="#22e06a" />7 لاعبين</StatusItem>
          <Divider $color="#57485a" />
          <StatusItem>السؤال 3/10</StatusItem>
          <Divider $color="#57485a" />
          <StatusItem $muted><bdi>join!</bdi> فقط</StatusItem>
        </Status>
      </GameHeader>
      <Board>
        <QuestionCard>
          <Question><span>في</span><span>ـف ؟</span></Question>
          <BadgeRow>
            <Badge>السؤال 3/10</Badge>
            <Badge $timer>
              <PauseButton aria-label="إيقاف"><Pause size={10} fill="currentColor" strokeWidth={0} /></PauseButton>
              <Round $color="#bd960f"><ClockIcon /></Round>
              <span>10s</span>
            </Badge>
          </BadgeRow>
          <WinnerModal>
            <CheckCircle><Check size={27} strokeWidth={5} /></CheckCircle>
            <WinnerName><bdi>Ghala_444</bdi> جابها!</WinnerName>
            <WinnerPoints>نقاطه الجديدة: 1</WinnerPoints>
          </WinnerModal>
          <Cursor width="8" height="13" viewBox="0 0 8 13">
            <path d="M0 0v10.500l2.500-2.300L4.200 12.500l1.800-.8L4.300 7.600H8z" fill="#fff" />
          </Cursor>
        </QuestionCard>
      </Board>
    </Game>
  );
}

function ChatPanel() {
  return (
    <Panel $side="left">
      <PanelHeader $height={46}>
        <PanelTitle><ChatIcon size={13} />الشات والسجل</PanelTitle>
        <ConnectPill><KickLogo size={8} /><Dot $color="#32a566" />متصل</ConnectPill>
        <IconButton aria-label="إخفاء"><SidebarIcon /></IconButton>
      </PanelHeader>
      <SubHeader $height={35}>
        <SubTitle><InfoIcon />سجل النظام</SubTitle>
        <CountBadge>22</CountBadge>
        <IconButton aria-label="مسح السجل" $color="#b3a8b4"><Trash2 size={10} /></IconButton>
      </SubHeader>
      <Feed $height={255}>
        <FeedList>
          {systemLog.map((row, i) => (
            <FeedRow key={i} $system>
              <RowMeta $system>
                <ChatIcon size={8} color="#5fa3ee" />
                <Author $color="#5fa3ee">System</Author>
                <span>{row.time} ص</span>
              </RowMeta>
              <RowText $system>{row.text}</RowText>
            </FeedRow>
          ))}
        </FeedList>
        <ScrollThumb $height={62} $bottom={1} />
      </Feed>
      <SubHeader $height={36}>
        <SubTitle><ChatIcon />شات البث</SubTitle>
        <CountBadge>110</CountBadge>
        <IconButton aria-label="مسح الشات" $color="#b3a8b4"><Trash2 size={10} /></IconButton>
        <IconButton $size={12} aria-label="محاذاة"><AlignIcon /></IconButton>
      </SubHeader>
      <Feed>
        <FeedList>
          {chat.map((row, i) => (
            <FeedRow key={i}>
              <RowMeta>
                <KickLogo size={8} />
                <Author $color={row.color}>{row.name}</Author>
                <span>04:25 ص</span>
              </RowMeta>
              <RowText>{row.text}</RowText>
            </FeedRow>
          ))}
        </FeedList>
        <ScrollThumb $height={10} $bottom={2} />
      </Feed>
    </Panel>
  );
}

function WindowsBar() {
  return (
    <Taskbar>
      <Weather>
        <WarningIcon />
        <div>
          <div>Rain warning</div>
          <div>Just issued</div>
        </div>
      </Weather>
      <Dock>
        <IconButton aria-label="Start"><StartIcon /></IconButton>
        <SearchBox>
          <Search size={12} />
          <SearchInput placeholder="بحث" aria-label="بحث" />
          <Pigeon />
        </SearchBox>
        <Apps>
          {apps.map((app) => (
            <AppButton key={app.name} aria-label={app.name} $current={app.current} $running={app.running}>
              {app.icon}
              {app.badge && <AppBadge $color={app.badgeColor}>{app.badge}</AppBadge>}
              {app.avatar && <AppBadge $color="conic-gradient(#ddd 0 20%, #444 0 45%, #bbb 0 70%, #555 0)" />}
            </AppButton>
          ))}
        </Apps>
      </Dock>
      <Tray>
        <IconButton $size={12} aria-label="More"><ChevronUp size={11} /></IconButton>
        <IconButton $size={12} aria-label="Microphone"><Mic size={11} /></IconButton>
        <TrayGroup>
          <Monitor size={11} />
          <Volume2 size={11} />
        </TrayGroup>
        <Clock>04:25 ص</Clock>
      </Tray>
    </Taskbar>
  );
}

function StreamOverlays() {
  return (
    <>
      <FollowerGoal>
        <GoalFill style={{ width: `${(279 / 300) * 100}%` }} />
        <GoalText>279</GoalText>
        <GoalText>FOLLOWERS</GoalText>
        <GoalText $align="right">300</GoalText>
      </FollowerGoal>
      <KickCounter><KickLogo size={24} color="#5bfc1c" />17</KickCounter>
      <StreamChat>
        {chat.slice(1).map((row, i) => (
          <StreamLine key={i}>
            <StreamAuthor $color={row.color}>
              {row.color === BLUE ? <BotBadge /> : <CrownBadge />}
              {row.name}
            </StreamAuthor>
            <StreamText $arabic={row.arabic}>{row.text}</StreamText>
          </StreamLine>
        ))}
      </StreamChat>
    </>
  );
}

function App() {
  return (
    <Page>
      <GlobalStyle />
      <Browser />
      <Main>
        <SettingsPanel />
        <GameArea />
        <ChatPanel />
      </Main>
      <WindowsBar />
      <StreamOverlays />
    </Page>
  );
}

export default App;
